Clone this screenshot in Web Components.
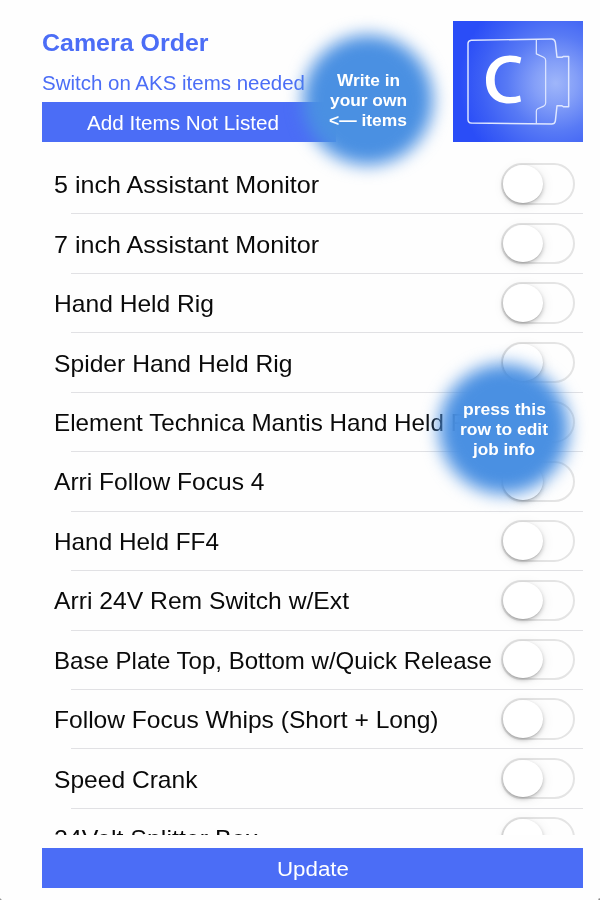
<!DOCTYPE html>
<html lang="en">
<head>
<meta charset="utf-8">
<title>Camera Order</title>
<style>
html, body { margin: 0; }
body { width: 600px; height: 900px; overflow: hidden; background: #fefefe; font-family: "Liberation Sans", Arial, sans-serif; }
</style>
</head>
<body>
<camera-order></camera-order>
<script>
const shadow = (el, html) => {
  const t = document.createElement('template');
  t.innerHTML = html;
  const root = el.attachShadow({ mode: 'open' });
  root.appendChild(t.content.cloneNode(true));
  return root;
};

// One line of text stretched horizontally to a given width.
customElements.define('fit-text', class extends HTMLElement {
  connectedCallback() {
    if (this.shadowRoot) return;
    const w = +this.getAttribute('width');
    const root = shadow(this, `<style>
      :host { display: block; width: ${w}px; white-space: nowrap; }
      span { display: inline-block; transform-origin: 0 50%; }
    </style><span></span>`);
    const span = root.querySelector('span');
    span.textContent = this.getAttribute('text');
    span.style.transform = `scaleX(${w / span.getBoundingClientRect().width})`;
  }
});

customElements.define('camera-logo', class extends HTMLElement {
  connectedCallback() {
    if (this.shadowRoot) return;
    shadow(this, `<style>
      :host { display: block; width: 130px; height: 121px; }
      svg { display: block; width: 100%; height: 100%; }
    </style>
    <svg viewBox="39 33 390 364" preserveAspectRatio="none">
      <defs><radialGradient id="g" gradientUnits="userSpaceOnUse" cx="347" cy="220" r="290">
        <stop offset="0" stop-color="#9fb6fa"/><stop offset=".22" stop-color="#849ff8"/>
        <stop offset=".5" stop-color="#587af5"/><stop offset=".78" stop-color="#3c5ff5"/><stop offset="1" stop-color="#2a4df7"/>
      </radialGradient></defs>
      <rect x="39" y="33" width="390" height="364" fill="url(#g)"/>
      <g fill="none" stroke="#dfe7ff" stroke-width="4.4" stroke-linejoin="round">
        <path d="M94 91 L335 87 Q344 87 346 97 L351 142 H366 L371 139.500 H386 V291 H370 L366 288 H351 L346 334 Q344 343 335 343 L94 340 Q84 339 84 329 V101 Q84 92 94 91 Z"/>
        <path stroke-width="3.600" d="M289 88 V132 L311 142 Q317 145 317 152 V280 Q317 286 311 289 L293 297 Q289 299 289 304 V342"/>
      </g>
      <path d="M244 143 Q230 137 211 137 C167 137 138 167 138 211 C138 255 165 281 207 281 Q229 281 243 275 L240 257 Q227 262 210 262 C181 262 164 243 164 210 C164 177 183 156 212 156 Q228 156 240 161 Z" fill="#fff"/>
    </svg>`);
  }
});

customElements.define('action-bar', class extends HTMLElement {
  connectedCallback() {
    if (this.shadowRoot) return;
    shadow(this, `<style>
      :host { display: flex; align-items: center; box-sizing: border-box; height: 40px; background: #4b6df6; color: #fff; font-size: 20px; line-height: 24px; }
    </style><slot></slot>`);
  }
});

customElements.define('toggle-switch', class extends HTMLElement {
  connectedCallback() {
    if (this.shadowRoot) return;
    shadow(this, `<style>
      :host { display: block; box-sizing: border-box; flex: none; width: 73.500px; height: 41.500px; border: 2px solid #e4e4e4; border-radius: 21px; }
      i { display: block; width: 40px; height: 37.500px; border-radius: 50%; background: #fff; box-shadow: 0 2px 4px rgba(0,0,0,.22), 0 1px 1px rgba(0,0,0,.09), 1px 2px 13px rgba(0,0,0,.07); }
    </style><i></i>`);
  }
});

customElements.define('item-row', class extends HTMLElement {
  connectedCallback() {
    if (this.shadowRoot) return;
    shadow(this, `<style>
      :host { display: flex; flex-direction: column; flex: none; height: 59.450px; }
      .main { display: flex; flex: 1; align-items: center; justify-content: space-between; padding: 0 8.500px 0 12px; }
      .rule { height: 1px; margin-left: 29px; background: #e1e1e4; }
      fit-text { font-size: 23.800px; line-height: 28px; color: #0a0a0a; padding-top: 2px; }
    </style>
    <div class="main"><fit-text width="${this.getAttribute('width')}" text="${this.getAttribute('label')}"></fit-text><toggle-switch></toggle-switch></div>
    <div class="rule"></div>`);
  }
});

customElements.define('hint-bubble', class extends HTMLElement {
  connectedCallback() {
    if (this.shadowRoot) return;
    shadow(this, `<style>
      :host { position: absolute; display: grid; place-items: center; width: 130px; height: 130px; color: #fff; font-weight: bold; font-size: 16.300px; line-height: 19.800px; }
      .disc { grid-area: 1/1; width: 100%; height: 100%; border-radius: 50%; background: #4a90e2; filter: blur(8.500px); }
      .copy { grid-area: 1/1; position: relative; display: flex; flex-direction: column; align-items: center; padding-top: 2px; }
    </style><div class="disc"></div><div class="copy"><slot></slot></div>`);
  }
});

customElements.define('camera-order', class extends HTMLElement {
  connectedCallback() {
    if (this.shadowRoot) return;
    const items = [
      ['5 inch Assistant Monitor', 265], ['7 inch Assistant Monitor', 265], ['Hand Held Rig', 160],
      ['Spider Hand Held Rig', 238.5], ['Element Technica Mantis Hand Held Rig', 433], ['Arri Follow Focus 4', 210.5],
      ['Hand Held FF4', 165], ['Arri 24V Rem Switch w/Ext', 295], ['Base Plate Top, Bottom w/Quick Release', 438],
      ['Follow Focus Whips (Short + Long)', 384.5], ['Speed Crank', 143.5], ['24Volt Splitter Box', 204]
    ];
    shadow(this, `<style>
      :host { display: flex; flex-direction: column; position: relative; box-sizing: border-box; width: 600px; height: 900px; padding: 21px 17px 12px 42px; overflow: hidden;
        background: radial-gradient(circle at 100% 100%, #888 0 1px, transparent 2.500px), radial-gradient(circle at 0 100%, #999 0 1px, transparent 2px), #fefefe; }
      header { display: flex; justify-content: space-between; height: 121px; }
      .titles { display: flex; flex-direction: column; width: 294px; color: #4b6df6; }
      .title { font-weight: bold; font-size: 23.300px; line-height: 28px; margin-top: 8px; }
      .sub { font-size: 20px; line-height: 24px; margin-top: 14px; }
      .titles action-bar { margin-top: auto; padding-left: 45px; padding-top: 2px; }
      .list { display: flex; flex-direction: column; margin-top: 13px; height: 680px; overflow: hidden; }
      .update { margin-top: auto; justify-content: center; padding-top: 1px; }
      .first { left: 303px; top: 35px; }
      .second { left: 439px; top: 364px; }
    </style>
    <header>
      <div class="titles">
        <fit-text class="title" width="166.500" text="Camera Order"></fit-text>
        <fit-text class="sub" width="263" text="Switch on AKS items needed"></fit-text>
        <action-bar><fit-text width="192" text="Add Items Not Listed"></fit-text></action-bar>
      </div>
      <camera-logo></camera-logo>
    </header>
    <div class="list">${items.map(([l, w]) => `<item-row label="${l}" width="${w}"></item-row>`).join('')}</div>
    <action-bar class="update"><fit-text width="72" text="Update"></fit-text></action-bar>
    <hint-bubble class="first"><fit-text width="63" text="Write in"></fit-text><fit-text width="77" text="your own"></fit-text><fit-text width="78" text="&lt;— items"></fit-text></hint-bubble>
    <hint-bubble class="second"><fit-text width="83" text="press this"></fit-text><fit-text width="88" text="row to edit"></fit-text><fit-text width="62" text="job info"></fit-text></hint-bubble>`);
  }
});
</script>
</body>
</html>
